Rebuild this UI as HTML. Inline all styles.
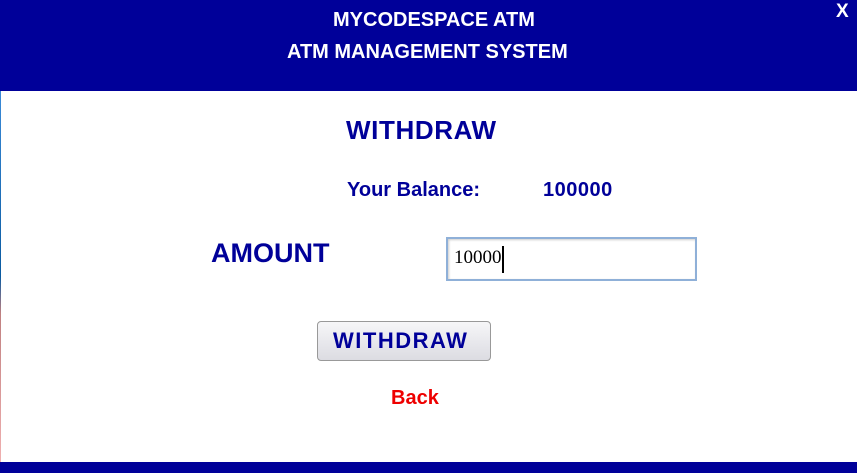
<!DOCTYPE html>
<html><head><style>
body{margin:0;width:857px;height:473px;background:#fff;position:relative;overflow:hidden;font-family:"Liberation Sans",sans-serif;font-weight:bold;}
.a{position:absolute;white-space:nowrap;line-height:1;}
#hd{position:absolute;left:0;top:0;width:857px;height:91px;background:#000099;}
#ft{position:absolute;left:0;top:462px;width:857px;height:11px;background:#000099;}
#lb{position:absolute;left:0;top:91px;width:1px;height:371px;background:linear-gradient(#3a8ad8,#0a5aa0 50%,#c08080 60%,#f0b0b0);}
.w{color:#fff;font-size:20px;}
.b{color:#000099;}
</style></head><body>
<div id="hd"></div><div id="ft"></div><div id="lb"></div>
<div class="a w" style="left:333px;top:10px;">MYCODESPACE ATM</div>
<div class="a w" style="left:287px;top:42px;">ATM MANAGEMENT SYSTEM</div>
<div class="a w" style="left:836px;top:2px;font-size:19px;">X</div>
<div class="a b" style="left:346px;top:117px;font-size:26px;letter-spacing:0.6px;">WITHDRAW</div>
<div class="a b" style="left:347px;top:180px;font-size:20px;">Your Balance:</div>
<div class="a b" style="left:543px;top:180px;font-size:20px;letter-spacing:0.5px;">100000</div>
<div class="a b" style="left:211px;top:240px;font-size:27px;">AMOUNT</div>
<div style="position:absolute;left:446px;top:237px;width:247px;height:40px;border:2px solid #8fb0d8;background:#fff;box-shadow:inset 1px 1px 2px #ccc;"></div>
<div class="a" style="left:454px;top:248px;font-family:'Liberation Serif',serif;font-weight:normal;font-size:19px;color:#000;">10000</div>
<div style="position:absolute;left:502px;top:246px;width:2px;height:27px;background:#000;"></div>
<div style="position:absolute;left:317px;top:321px;width:172px;height:38px;border:1px solid #999;border-radius:4px;background:linear-gradient(#f6f6f8,#dcdce2);"></div>
<div class="a b" style="left:333px;top:330px;font-size:22px;letter-spacing:1.5px;">WITHDRAW</div>
<div class="a" style="left:391px;top:388px;font-size:20px;color:#ee0000;">Back</div>
</body></html>
